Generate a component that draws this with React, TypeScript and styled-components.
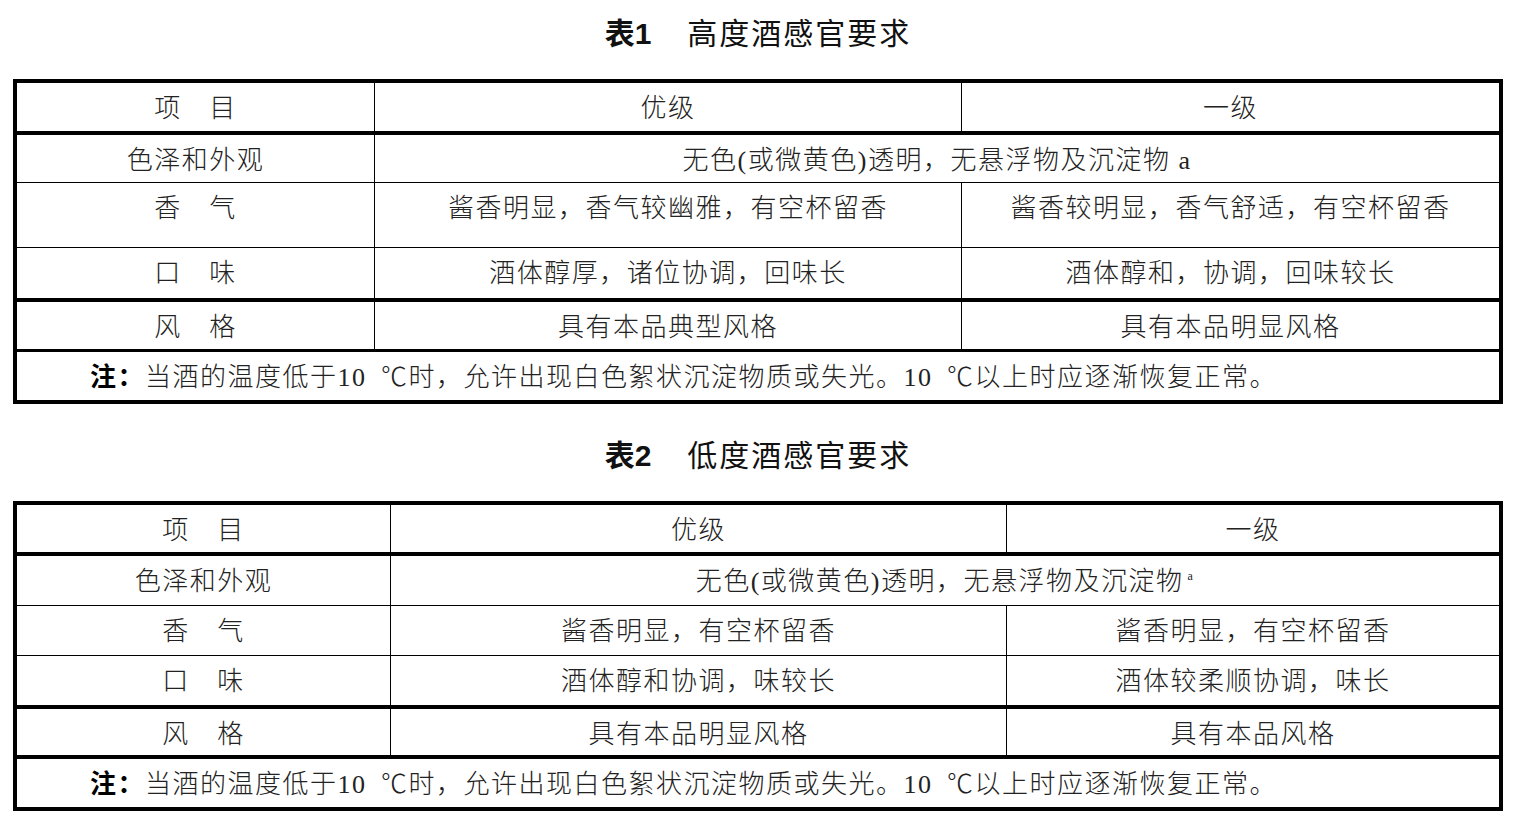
import React from 'react';
import styled, { createGlobalStyle } from 'styled-components';

const GlobalStyle = createGlobalStyle`
  html, body {
    margin: 0;
    padding: 0;
    background: #fff;
  }
`;

const serifStack = '"Liberation Serif", "Noto Sans CJK SC", serif';
const sansStack = '"Liberation Sans", "Noto Sans CJK SC", sans-serif';

const Page = styled.div`
  width: 1490px;
  padding: 11px 0 0 13px;
  color: #1a1a1a;
`;

const Title = styled.h2<{ $gapTop: number }>`
  display: flex;
  justify-content: center;
  align-items: center;
  height: 40px;
  margin: ${(p) => p.$gapTop}px 0 28px;
  font-family: ${sansStack};
  font-size: 30px;
  font-weight: 400;
  color: #111;
`;

const TitleNum = styled.span`
  font-weight: 700;
  margin-right: 36px;
`;

const TitleName = styled.span`
  letter-spacing: 2px;
`;

const Table = styled.table`
  width: 1490px;
  border-collapse: separate;
  border-spacing: 0;
  border: 4px solid #000;
  table-layout: fixed;
  font-family: ${serifStack};
  font-size: 26px;
  font-weight: 300;
  letter-spacing: 1.5px;
  color: #222;
`;

const Row = styled.tr<{ $h: number; $rule: number }>`
  & > td {
    height: ${(p) => p.$h}px;
    border-bottom: ${(p) => p.$rule}px solid #000;
  }
`;

const Cell = styled.td<{ $last?: boolean; $align?: 'left' | 'center' }>`
  box-sizing: border-box;
  padding: 10px 0 0 ${(p) => (p.$align === 'left' ? '73px' : '0')};
  vertical-align: top;
  line-height: 32px;
  text-align: ${(p) => p.$align ?? 'center'};
  border-right: ${(p) => (p.$last ? '0' : '1px solid #000')};
  white-space: nowrap;
`;

const NoteLabel = styled.b`
  font-weight: 700;
  color: #000;
`;

const Sup = styled.sup`
  font-size: 12px;
  line-height: 0;
  vertical-align: 10px;
  margin-left: 4px;
`;

type Spec = {
  cols: [number, number, number];
  rows: { h: number; rule: number }[];
  appearance: React.ReactNode;
  aroma: [string, string];
  taste: [string, string];
  style: [string, string];
};

const NOTE_TEXT = '当酒的温度低于10\u2002℃时，允许出现白色絮状沉淀物质或失光。10\u2002℃以上时应逐渐恢复正常。';

const SensoryTable: React.FC<{ spec: Spec }> = ({ spec }) => {
  const { cols, rows } = spec;
  return (
    <Table>
      <colgroup>
        {cols.map((w, i) => (
          <col key={i} style={{ width: w }} />
        ))}
      </colgroup>
      <tbody>
        <Row $h={rows[0].h} $rule={rows[0].rule}>
          <Cell>项　目</Cell>
          <Cell>优级</Cell>
          <Cell $last>一级</Cell>
        </Row>
        <Row $h={rows[1].h} $rule={rows[1].rule}>
          <Cell>色泽和外观</Cell>
          <Cell colSpan={2} $last>
            {spec.appearance}
          </Cell>
        </Row>
        <Row $h={rows[2].h} $rule={rows[2].rule}>
          <Cell>香　气</Cell>
          <Cell>{spec.aroma[0]}</Cell>
          <Cell $last>{spec.aroma[1]}</Cell>
        </Row>
        <Row $h={rows[3].h} $rule={rows[3].rule}>
          <Cell>口　味</Cell>
          <Cell>{spec.taste[0]}</Cell>
          <Cell $last>{spec.taste[1]}</Cell>
        </Row>
        <Row $h={rows[4].h} $rule={rows[4].rule}>
          <Cell>风　格</Cell>
          <Cell>{spec.style[0]}</Cell>
          <Cell $last>{spec.style[1]}</Cell>
        </Row>
        <Row $h={rows[5].h} $rule={rows[5].rule}>
          <Cell colSpan={3} $last $align="left">
            <NoteLabel>注：</NoteLabel>
            {NOTE_TEXT}
          </Cell>
        </Row>
      </tbody>
    </Table>
  );
};

const highSpec: Spec = {
  cols: [358, 587, 537],
  rows: [
    { h: 52, rule: 4 },
    { h: 48, rule: 1 },
    { h: 65, rule: 1 },
    { h: 54, rule: 4 },
    { h: 50, rule: 3 },
    { h: 48, rule: 0 },
  ],
  appearance: <>无色(或微黄色)透明，无悬浮物及沉淀物 a</>,
  aroma: ['酱香明显，香气较幽雅，有空杯留香', '酱香较明显，香气舒适，有空杯留香'],
  taste: ['酒体醇厚，诸位协调，回味长', '酒体醇和，协调，回味较长'],
  style: ['具有本品典型风格', '具有本品明显风格'],
};

const lowSpec: Spec = {
  cols: [374, 616, 492],
  rows: [
    { h: 51, rule: 4 },
    { h: 50, rule: 1 },
    { h: 50, rule: 1 },
    { h: 53, rule: 4 },
    { h: 50, rule: 4 },
    { h: 48, rule: 0 },
  ],
  appearance: (
    <>
      无色(或微黄色)透明，无悬浮物及沉淀物<Sup>a</Sup>
    </>
  ),
  aroma: ['酱香明显，有空杯留香', '酱香明显，有空杯留香'],
  taste: ['酒体醇和协调，味较长', '酒体较柔顺协调，味长'],
  style: ['具有本品明显风格', '具有本品风格'],
};

export default function App() {
  return (
    <>
      <GlobalStyle />
      <Page>
        <Title $gapTop={0}>
          <TitleNum>表1</TitleNum>
          <TitleName>高度酒感官要求</TitleName>
        </Title>
        <SensoryTable spec={highSpec} />
        <Title $gapTop={29}>
          <TitleNum>表2</TitleNum>
          <TitleName>低度酒感官要求</TitleName>
        </Title>
        <SensoryTable spec={lowSpec} />
      </Page>
    </>
  );
}
